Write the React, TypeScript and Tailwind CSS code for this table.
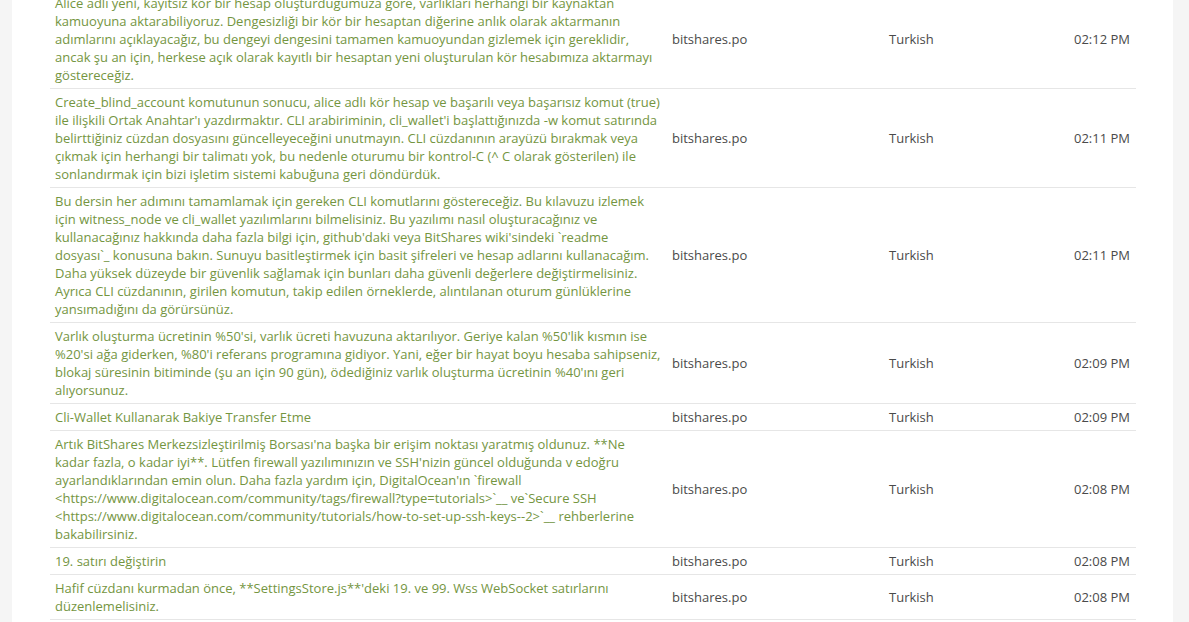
import React from 'react';

type Row = { text: string; file: string; lang: string; time: string };

const rows: Row[] = [
  {
    text: "Alice adlı yeni, kayıtsız kör bir hesap oluşturduğumuza göre, varlıkları herhangi bir kaynaktan kamuoyuna aktarabiliyoruz. Dengesizliği bir kör bir hesaptan diğerine anlık olarak aktarmanın adımlarını açıklayacağız, bu dengeyi dengesini tamamen kamuoyundan gizlemek için gereklidir, ancak şu an için, herkese açık olarak kayıtlı bir hesaptan yeni oluşturulan kör hesabımıza aktarmayı göstereceğiz.",
    file: 'bitshares.po',
    lang: 'Turkish',
    time: '02:12 PM',
  },
  {
    text: "Create_blind_account komutunun sonucu, alice adlı kör hesap ve başarılı veya başarısız komut (true) ile ilişkili Ortak Anahtar'ı yazdırmaktır. CLI arabiriminin, cli_wallet'i başlattığınızda -w komut satırında belirttiğiniz cüzdan dosyasını güncelleyeceğini unutmayın. CLI cüzdanının arayüzü bırakmak veya çıkmak için herhangi bir talimatı yok, bu nedenle oturumu bir kontrol-C (^ C olarak gösterilen) ile sonlandırmak için bizi işletim sistemi kabuğuna geri döndürdük.",
    file: 'bitshares.po',
    lang: 'Turkish',
    time: '02:11 PM',
  },
  {
    text: "Bu dersin her adımını tamamlamak için gereken CLI komutlarını göstereceğiz. Bu kılavuzu izlemek için witness_node ve cli_wallet yazılımlarını bilmelisiniz. Bu yazılımı nasıl oluşturacağınız ve kullanacağınız hakkında daha fazla bilgi için, github'daki veya BitShares wiki'sindeki `readme dosyası`_ konusuna bakın. Sunuyu basitleştirmek için basit şifreleri ve hesap adlarını kullanacağım. Daha yüksek düzeyde bir güvenlik sağlamak için bunları daha güvenli değerlere değiştirmelisiniz. Ayrıca CLI cüzdanının, girilen komutun, takip edilen örneklerde, alıntılanan oturum günlüklerine yansımadığını da görürsünüz.",
    file: 'bitshares.po',
    lang: 'Turkish',
    time: '02:11 PM',
  },
  {
    text: "Varlık oluşturma ücretinin %50'si, varlık ücreti havuzuna aktarılıyor. Geriye kalan %50'lik kısmın ise %20'si ağa giderken, %80'i referans programına gidiyor. Yani, eğer bir hayat boyu hesaba sahipseniz, blokaj süresinin bitiminde (şu an için 90 gün), ödediğiniz varlık oluşturma ücretinin %40'ını geri alıyorsunuz.",
    file: 'bitshares.po',
    lang: 'Turkish',
    time: '02:09 PM',
  },
  {
    text: 'Cli-Wallet Kullanarak Bakiye Transfer Etme',
    file: 'bitshares.po',
    lang: 'Turkish',
    time: '02:09 PM',
  },
  {
    text: "Artık BitShares Merkezsizleştirilmiş Borsası'na başka bir erişim noktası yaratmış oldunuz. **Ne kadar fazla, o kadar iyi**. Lütfen firewall yazılımınızın ve SSH'nizin güncel olduğunda v edoğru ayarlandıklarından emin olun. Daha fazla yardım için, DigitalOcean'ın `firewall <https://www.digitalocean.com/community/tags/firewall?type=tutorials>`__ ve`Secure SSH <https://www.digitalocean.com/community/tutorials/how-to-set-up-ssh-keys--2>`__ rehberlerine bakabilirsiniz.",
    file: 'bitshares.po',
    lang: 'Turkish',
    time: '02:08 PM',
  },
  {
    text: '19. satırı değiştirin',
    file: 'bitshares.po',
    lang: 'Turkish',
    time: '02:08 PM',
  },
  {
    text: "Hafif cüzdanı kurmadan önce, **SettingsStore.js**'deki 19. ve 99. Wss WebSocket satırlarını düzenlemelisiniz.",
    file: 'bitshares.po',
    lang: 'Turkish',
    time: '02:08 PM',
  },
];

const App = () => {
  return (
    <div
      className="min-h-screen bg-[#f5f5f5] overflow-hidden"
      style={{ fontFamily: '"Open Sans", "Noto Sans", sans-serif' }}
    >
      <div className="ml-[12px] w-[1161px] h-[622px] bg-white pl-[38px] pr-[37px] overflow-hidden">
        <table className="-mt-[10px] w-full border-collapse table-fixed text-[13px] leading-[18px]">
          <colgroup>
            <col className="w-[617px]" />
            <col className="w-[217px]" />
            <col className="w-[180px]" />
            <col />
          </colgroup>
          <tbody>
            {rows.map((row, i) => (
              <tr key={i} className="border-b border-[#e6e6e6]">
                <td className="px-[5px] py-[4px] align-top text-[#74953f]">
                  {row.text}
                </td>
                <td className="px-[5px] py-[4px] align-middle text-[#4a4a4a]">
                  {row.file}
                </td>
                <td className="px-[5px] py-[4px] align-middle text-[#4a4a4a]">
                  {row.lang}
                </td>
                <td className="pl-[5px] pr-[6px] py-[4px] align-middle text-right text-[#4a4a4a]">
                  {row.time}
                </td>
              </tr>
            ))}
          </tbody>
        </table>
      </div>
    </div>
  );
};

export default App;
